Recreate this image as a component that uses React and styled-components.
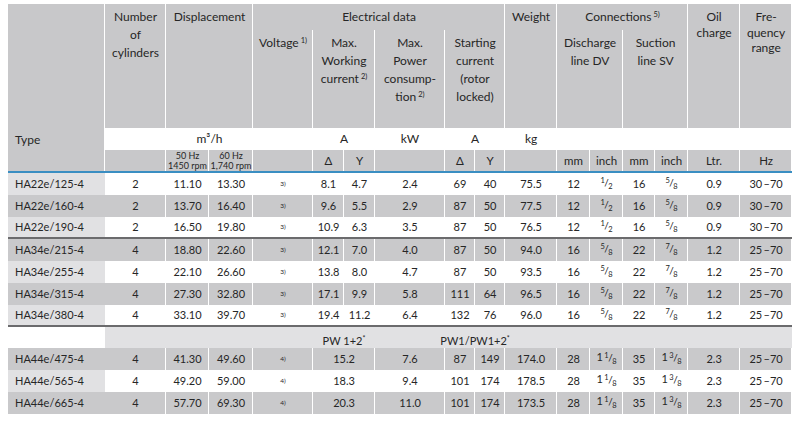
import styled, { createGlobalStyle } from 'styled-components';

const HEAD = '#c8c8ca';
const GRAY = '#c9c9cb';
const LIGHT = '#e1e1e3';
const BLUE = '#3a8ec2';
const RULE = '#6b6b6d';

const GlobalStyle = createGlobalStyle`
  html, body {
    margin: 0;
    padding: 0;
    background: #fff;
  }
  body {
    font-family: Lato, "Open Sans", sans-serif;
    color: #262626;
  }
`;

const Page = styled.div`
  width: 800px;
  height: 424px;
  box-sizing: border-box;
  padding: 4px 8px 0;
  overflow: hidden;
`;

const Table = styled.table`
  width: 784px;
  table-layout: fixed;
  border-collapse: separate;
  border-spacing: 0;
`;

const HeadRow = styled.tr`
  height: ${p => p.$h}px;
`;

const Th = styled.th`
  background: ${HEAD};
  box-shadow: inset -1px 0 0 #fff;
  font-size: 12px;
  font-weight: 400;
  line-height: ${p => p.$lh || 18}px;
  text-align: center;
  vertical-align: ${p => p.$valign || 'top'};
  padding: ${p => p.$pt ?? 4}px 1px 0;
  white-space: nowrap;
`;

const TypeTh = styled.th`
  background: ${HEAD};
  box-shadow: inset -1px 0 0 #fff;
  border-bottom: 2px solid ${BLUE};
  font-size: 12px;
  font-weight: 400;
  line-height: 16px;
  text-align: left;
  vertical-align: bottom;
  padding: 0 0 23px 7px;
`;

const UnitTh = styled.th`
  background: #fff;
  font-size: 12px;
  font-weight: 400;
  line-height: 16px;
  text-align: center;
  vertical-align: middle;
  padding: 0;
`;

const SubTh = styled.th`
  background: ${HEAD};
  box-shadow: inset -1px 0 0 #fff;
  border-bottom: 2px solid ${BLUE};
  font-size: ${p => (p.$small ? 9 : 11.5)}px;
  font-weight: 400;
  line-height: ${p => (p.$small ? 10 : 14)}px;
  text-align: center;
  vertical-align: ${p => (p.$small ? 'bottom' : 'middle')};
  padding: 0;
  white-space: nowrap;
`;

const Note = styled.sup`
  font-size: 7.5px;
  line-height: 0;
  vertical-align: 4px;
  margin-left: 2px;
`;

const DataRow = styled.tr`
  height: 22px;

  td {
    background: ${p => (p.$gray ? GRAY : '#fff')};
    box-shadow: ${p => (p.$gray ? 'inset -1px 0 0 #fff' : 'none')};
    border-bottom: ${p => (p.$rule ? `2px solid ${RULE}` : '0')};
    font-size: 11px;
    line-height: 14px;
    text-align: center;
    vertical-align: middle;
    padding: 0;
    white-space: nowrap;
  }

  td:first-child {
    background: ${p => (p.$gray ? GRAY : LIGHT)};
    box-shadow: none;
    text-align: left;
    padding-left: 7px;
  }
`;

const PwRow = styled.tr`
  height: 21px;

  td {
    background: ${LIGHT};
    font-size: 11px;
    line-height: 14px;
    text-align: center;
    vertical-align: bottom;
    padding: 0;
    white-space: nowrap;
  }

  td:first-child {
    background: #fff;
  }
`;

const Spill = styled.span`
  display: inline-block;
  margin: 0 -20px;
`;

const Star = styled.sup`
  font-size: 7px;
  line-height: 0;
  vertical-align: 4px;
`;

const VoltNote = styled.span`
  font-size: 6.5px;
  vertical-align: 3px;
`;

const FracBox = styled.span`
  display: inline-block;
  white-space: nowrap;
`;

const Num = styled.span`
  font-size: 7.5px;
  vertical-align: 3px;
`;

const Den = styled.span`
  font-size: 7.5px;
  vertical-align: -3px;
`;

const Slash = styled.span`
  font-size: 10px;
  margin: 0 -0.5px;
`;

const Frac = ({ whole, n, d }) => (
  <FracBox>
    {whole ? `${whole}\u2009` : ''}
    <Num>{n}</Num>
    <Slash>/</Slash>
    <Den>{d}</Den>
  </FracBox>
);

const widths = [97, 61, 43, 44, 60, 31, 31, 70, 30, 30, 52, 33, 33, 32, 33, 52, 52];

const r = (type, cyl, d50, d60, v, mD, mY, pw, sD, sY, w, dmm, dIn, smm, sIn, oil, f) => ({
  type, cyl, d50, d60, v, mD, mY, pw, sD, sY, w, dmm, dIn, smm, sIn, oil, f,
});

const H = [0, 1, 2];
const F58 = [0, 5, 8];
const F78 = [0, 7, 8];
const F118 = [1, 1, 8];
const F138 = [1, 3, 8];

const sections = [
  [
    r('HA22e/125-4', 2, '11.10', '13.30', '3)', '8.1', '4.7', '2.4', 69, 40, '75.5', 12, H, 16, F58, '0.9', '30\u2009–70'),
    r('HA22e/160-4', 2, '13.70', '16.40', '3)', '9.6', '5.5', '2.9', 87, 50, '77.5', 12, H, 16, F58, '0.9', '30\u2009–70'),
    r('HA22e/190-4', 2, '16.50', '19.80', '3)', '10.9', '6.3', '3.5', 87, 50, '76.5', 12, H, 16, F58, '0.9', '30\u2009–70'),
  ],
  [
    r('HA34e/215-4', 4, '18.80', '22.60', '3)', '12.1', '7.0', '4.0', 87, 50, '94.0', 16, F58, 22, F78, '1.2', '25\u2009–70'),
    r('HA34e/255-4', 4, '22.10', '26.60', '3)', '13.8', '8.0', '4.7', 87, 50, '93.5', 16, F58, 22, F78, '1.2', '25\u2009–70'),
    r('HA34e/315-4', 4, '27.30', '32.80', '3)', '17.1', '9.9', '5.8', 111, 64, '96.5', 16, F58, 22, F78, '1.2', '25\u2009–70'),
    r('HA34e/380-4', 4, '33.10', '39.70', '3)', '19.4', '11.2', '6.4', 132, 76, '96.0', 16, F58, 22, F78, '1.2', '25\u2009–70'),
  ],
];

const pwRows = [
  r('HA44e/475-4', 4, '41.30', '49.60', '4)', '15.2', null, '7.6', 87, 149, '174.0', 28, F118, 35, F138, '2.3', '25\u2009–70'),
  r('HA44e/565-4', 4, '49.20', '59.00', '4)', '18.3', null, '9.4', 101, 174, '178.5', 28, F118, 35, F138, '2.3', '25\u2009–70'),
  r('HA44e/665-4', 4, '57.70', '69.30', '4)', '20.3', null, '11.0', 101, 174, '173.5', 28, F118, 35, F138, '2.3', '25\u2009–70'),
];

const Cells = ({ row }) => (
  <>
    <td>{row.type}</td>
    <td>{row.cyl}</td>
    <td>{row.d50}</td>
    <td>{row.d60}</td>
    <td>
      <VoltNote>{row.v}</VoltNote>
    </td>
    {row.mY === null ? (
      <td colSpan={2}>{row.mD}</td>
    ) : (
      <>
        <td>{row.mD}</td>
        <td>{row.mY}</td>
      </>
    )}
    <td>{row.pw}</td>
    <td>{row.sD}</td>
    <td>{row.sY}</td>
    <td>{row.w}</td>
    <td>{row.dmm}</td>
    <td>
      <Frac whole={row.dIn[0]} n={row.dIn[1]} d={row.dIn[2]} />
    </td>
    <td>{row.smm}</td>
    <td>
      <Frac whole={row.sIn[0]} n={row.sIn[1]} d={row.sIn[2]} />
    </td>
    <td>{row.oil}</td>
    <td>{row.f}</td>
  </>
);

export default function App() {
  return (
    <Page>
      <GlobalStyle />
      <Table>
        <colgroup>
          {widths.map((w, i) => (
            <col key={i} style={{ width: w }} />
          ))}
        </colgroup>
        <thead>
          <HeadRow $h={26}>
            <TypeTh rowSpan={4}>Type</TypeTh>
            <Th rowSpan={2}>
              Number
              <br />
              of
              <br />
              cylinders
            </Th>
            <Th rowSpan={2} colSpan={2}>Displacement</Th>
            <Th colSpan={6} $valign="middle" $pt={0}>Electrical data</Th>
            <Th rowSpan={2}>Weight</Th>
            <Th colSpan={4} $valign="middle" $pt={0}>
              Connections<Note>5)</Note>
            </Th>
            <Th rowSpan={2} $lh={15.5} $pt={5}>
              Oil
              <br />
              charge
            </Th>
            <Th rowSpan={2} $lh={15.5} $pt={5}>
              Fre-
              <br />
              quency
              <br />
              range
            </Th>
          </HeadRow>
          <HeadRow $h={98}>
            <Th>
              Voltage<Note>1)</Note>
            </Th>
            <Th colSpan={2}>
              Max.
              <br />
              Working
              <br />
              current<Note>2)</Note>
            </Th>
            <Th>
              Max.
              <br />
              Power
              <br />
              consump-
              <br />
              tion<Note>2)</Note>
            </Th>
            <Th colSpan={2}>
              Starting
              <br />
              current
              <br />
              (rotor
              <br />
              locked)
            </Th>
            <Th colSpan={2}>
              Discharge
              <br />
              line DV
            </Th>
            <Th colSpan={2}>
              Suction
              <br />
              line SV
            </Th>
          </HeadRow>
          <HeadRow $h={22}>
            <UnitTh />
            <UnitTh colSpan={2}>m³/h</UnitTh>
            <UnitTh />
            <UnitTh colSpan={2}>A</UnitTh>
            <UnitTh>kW</UnitTh>
            <UnitTh colSpan={2}>A</UnitTh>
            <UnitTh>kg</UnitTh>
            <UnitTh colSpan={6} />
          </HeadRow>
          <HeadRow $h={23}>
            <SubTh />
            <SubTh $small>
              50 Hz
              <br />
              1450 rpm
            </SubTh>
            <SubTh $small>
              60 Hz
              <br />
              1,740 rpm
            </SubTh>
            <SubTh />
            <SubTh>Δ</SubTh>
            <SubTh>Y</SubTh>
            <SubTh />
            <SubTh>Δ</SubTh>
            <SubTh>Y</SubTh>
            <SubTh />
            <SubTh>mm</SubTh>
            <SubTh>inch</SubTh>
            <SubTh>mm</SubTh>
            <SubTh>inch</SubTh>
            <SubTh>Ltr.</SubTh>
            <SubTh>Hz</SubTh>
          </HeadRow>
        </thead>
        <tbody>
          {sections[0].map((row, i) => (
            <DataRow key={row.type} $gray={i % 2 === 1} $rule={i === 2}>
              <Cells row={row} />
            </DataRow>
          ))}
          {sections[1].map((row, i) => (
            <DataRow key={row.type} $gray={i % 2 === 0} $rule={i === 3}>
              <Cells row={row} />
            </DataRow>
          ))}
          <PwRow>
            <td />
            <td colSpan={4} />
            <td colSpan={2}>
              PW 1+2<Star>*</Star>
            </td>
            <td />
            <td colSpan={2}>
              <Spill>
                PW1/PW1+2<Star>*</Star>
              </Spill>
            </td>
            <td colSpan={7} />
          </PwRow>
          {pwRows.map((row, i) => (
            <DataRow key={row.type} $gray={i % 2 === 0}>
              <Cells row={row} />
            </DataRow>
          ))}
        </tbody>
      </Table>
    </Page>
  );
}
